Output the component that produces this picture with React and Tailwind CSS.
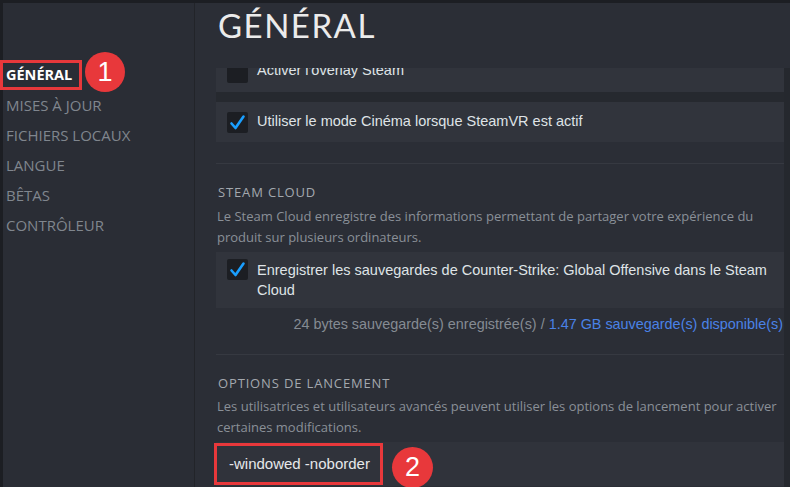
import React from "react";

function Check({ checked }) {
  return (
    <div className="w-[21px] h-[21px] shrink-0 rounded-[2px] bg-[#1c1e23] flex items-center justify-center">
      {checked && (
        <svg width="17" height="17" viewBox="0 0 17 17">
          <path d="M2.5 9.5 L6.5 14 L14.5 2.5" fill="none" stroke="#1a9fff" strokeWidth="2.6" strokeLinecap="round" strokeLinejoin="round" />
        </svg>
      )}
    </div>
  );
}

const nav = ["GÉNÉRAL", "MISES À JOUR", "FICHIERS LOCAUX", "LANGUE", "BÊTAS", "CONTRÔLEUR"];

export default function App() {
  const body = { fontFamily: '"Liberation Sans", Arial, sans-serif' };
  const ui = { fontFamily: '"Open Sans", "Noto Sans", sans-serif' };
  return (
    <div className="relative w-[790px] h-[487px] overflow-hidden flex bg-[#1c1e23] pt-[3px] pl-[3px]">
      <aside className="w-[192px] shrink-0 bg-[#2a2d35] border-r border-[#222429] pt-[57px]" style={ui}>
        {nav.map((n, i) => (
          <div
            key={n}
            className={
              "h-[30px] flex items-center pl-[3px] " +
              (i === 0 ? "text-white font-bold text-[14.5px]" : "text-[#80868e] text-[15px]")
            }
          >
            {n}
          </div>
        ))}
      </aside>
      <main className="flex-1 flex flex-col bg-[#2b2e36] min-w-0">
        <h1
          className="h-[65px] shrink-0 pl-[23px] pt-[2px] text-[33px] leading-[40px] tracking-[1.5px] text-[#ebebeb]"
          style={{ fontFamily: 'Lato, "Open Sans", sans-serif' }}
        >
          GÉNÉRAL
        </h1>
        <div className="flex-1 overflow-hidden flex">
          <div className="flex-1 pl-[21px] min-w-0">
            <div className="-mt-[16px] flex flex-col">
              <div className="h-[40px] bg-[#31343c] flex items-center gap-[9px] pl-[11px]">
                <Check checked={false} />
                <span className="text-[14.5px] text-[#dfe3e6] -mt-[2px]" style={body}>Activer l'overlay Steam</span>
              </div>
              <div className="h-[10px] bg-[#26292f]" />
              <div className="h-[40px] bg-[#31343c] flex items-center gap-[9px] pl-[11px]">
                <Check checked />
                <span className="text-[14.5px] text-[#dfe3e6]" style={body}>
                  Utiliser le mode Cinéma lorsque SteamVR est actif
                </span>
              </div>
              <div className="h-[21px]" />
              <div className="h-px bg-[#363941]" />

              <div className="pt-[18px] pl-[2px] text-[13px] leading-[20px] tracking-[0.85px] text-[#a3a8ae]" style={ui}>
                STEAM CLOUD
              </div>
              <div className="mt-[4px] pl-[1px] text-[13px] leading-[21px] text-[#8a9098]" style={ui}>
                Le Steam Cloud enregistre des informations permettant de partager votre expérience du produit sur plusieurs ordinateurs.
              </div>
              <div className="mt-[4px] bg-[#31343c] flex items-start gap-[9px] pl-[11px] pt-[7px] pb-[8px] pr-[8px]">
                <Check checked />
                <span className="text-[14.5px] leading-[20px] text-[#dfe3e6] pt-[1px]" style={body}>
                  Enregistrer les sauvegardes de Counter-Strike: Global Offensive dans le Steam Cloud
                </span>
              </div>
              <div className="mt-[6px] h-[20px] text-right text-[14.4px] leading-[20px] text-[#858b93] pr-[1px] whitespace-nowrap" style={body}>
                24 bytes sauvegarde(s) enregistrée(s) / <span className="text-[#4a82e6]">1.47 GB sauvegarde(s) disponible(s)</span>
              </div>
              <div className="h-[20px]" />
              <div className="h-px bg-[#363941]" />

              <div className="pt-[18px] pl-[2px] text-[13px] leading-[20px] tracking-[0.85px] text-[#a3a8ae]" style={ui}>
                OPTIONS DE LANCEMENT
              </div>
              <div className="mt-[3px] pl-[1px] text-[13px] leading-[21px] text-[#8a9098]" style={ui}>
                Les utilisatrices et utilisateurs avancés peuvent utiliser les options de lancement pour activer certaines modifications.
              </div>
              <div className="mt-[4px] h-[44px] bg-[#30333b] flex items-center pl-[13px] text-[15px] text-[#e6e8ea]" style={body}>
                -windowed -noborder
              </div>
            </div>
          </div>
          <div className="w-[6px] shrink-0 bg-[#25282e]" />
        </div>
      </main>

      {/* annotations */}
      <div className="absolute left-0 top-[60px] w-[82px] h-[30px] border-[3px] border-[#e8383b]" />
      <div
        className="absolute left-[85px] top-[52px] w-[40px] h-[40px] rounded-full bg-[#e8383b] flex items-center justify-center text-white text-[27px]"
        style={body}
      >
        1
      </div>
      <div className="absolute left-[214px] top-[443px] w-[169px] h-[42px] border-[3px] border-[#e8383b]" />
      <div
        className="absolute left-[392px] top-[447px] w-[41px] h-[41px] rounded-full bg-[#e8383b] flex items-center justify-center text-white text-[27px]"
        style={body}
      >
        2
      </div>
    </div>
  );
}
